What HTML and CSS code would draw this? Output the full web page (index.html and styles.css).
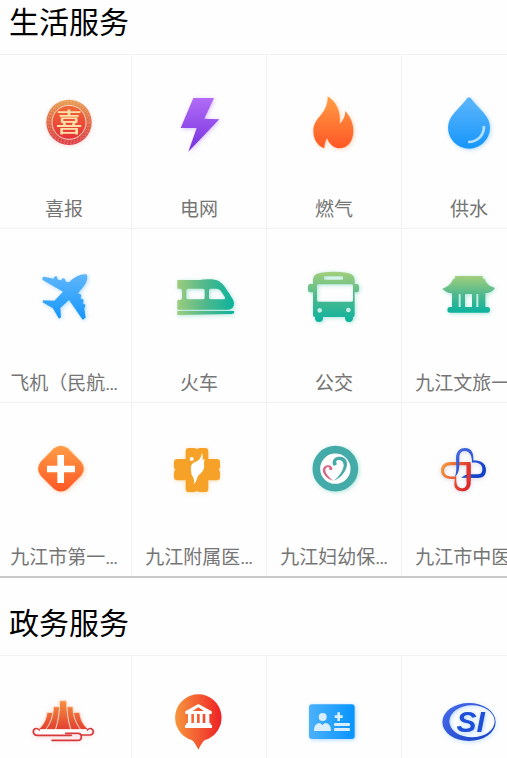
FILE: index.html
```html
<!DOCTYPE html>
<html lang="zh-CN">
<head>
    <meta charset="UTF-8">
    <meta name="viewport" content="width=device-width, initial-scale=1">
    <title>生活服务</title>
    <link rel="stylesheet" href="styles.css">
</head>
<body>
    <main class="page">
        <!-- life services -->
        <section class="service">
            <h2 class="title">生活服务</h2>
            <div class="grid">
                <a class="item" href="#">
                    <svg class="icon glow-red" viewBox="72 249 240 240" aria-hidden="true">
                        <defs>
                            <linearGradient id="coinRim" x1="0" y1="0" x2="0" y2="1"><stop offset="0" stop-color="#e8a055"/><stop offset="0.5" stop-color="#df6644"/><stop offset="1" stop-color="#dc3a4a"/></linearGradient>
                            <linearGradient id="coin" x1="0" y1="0" x2="0" y2="1"><stop offset="0" stop-color="#f26a35"/><stop offset="1" stop-color="#e5303a"/></linearGradient>
                        </defs>
                        <circle cx="207" cy="367" r="68" fill="url(#coinRim)"/>
                        <circle cx="207" cy="367" r="63" fill="none" stroke="#fbd5b0" stroke-opacity="0.35" stroke-width="4" stroke-dasharray="5 5"/>
                        <circle cx="207" cy="367" r="57" fill="none" stroke="#fbd5b0" stroke-opacity="0.3" stroke-width="4" stroke-dasharray="4 6"/>
                        <circle cx="207" cy="367" r="51" fill="url(#coin)" stroke="#fbd9c4" stroke-width="3"/>
                        <text class="coin-text" x="207" y="397" text-anchor="middle">喜</text>
                    </svg>
                    <span class="label">喜报</span>
                </a>
                <a class="item" href="#">
                    <svg class="icon glow-purple" viewBox="477 249 240 240" aria-hidden="true">
                        <defs>
                            <linearGradient id="bolt" x1="0" y1="0" x2="0" y2="1"><stop offset="0" stop-color="#b26cf8"/><stop offset="1" stop-color="#7431dc"/></linearGradient>
                        </defs>
                        <path fill="url(#bolt)" d="M580 294H642L613 356L658 358L565 455L590 384H542Z"/>
                    </svg>
                    <span class="label">电网</span>
                </a>
                <a class="item" href="#">
                    <svg class="icon glow-orange" viewBox="120 249 240 240" aria-hidden="true">
                        <defs>
                            <linearGradient id="orange" x1="0" y1="0" x2="0" y2="1"><stop offset="0" stop-color="#ff9d45"/><stop offset="1" stop-color="#ff5724"/></linearGradient>
                        </defs>
                        <path fill="url(#orange)" d="M221 289C246 305 262 335 257 371C268 362 274 348 274 333C290 352 298 370 298 392C298 425 280 445 255 445C238 444 226 432 219 415C214 424 211 434 211 445C190 437 178 418 178 393C178 350 222 345 221 289Z"/>
                    </svg>
                    <span class="label">燃气</span>
                </a>
                <a class="item" href="#">
                    <svg class="icon glow-blue" viewBox="525 249 240 240" aria-hidden="true">
                        <defs>
                            <linearGradient id="blue" x1="0" y1="0" x2="0" y2="1"><stop offset="0" stop-color="#5fb6fb"/><stop offset="1" stop-color="#1596fb"/></linearGradient>
                        </defs>
                        <path fill="url(#blue)" d="M640 294Q645 290 650 294C662 310 677 325 690 340C702 354 708 368 708 383A63 63 0 0 1 582 383C582 368 588 354 600 340C613 325 628 310 640 294Z"/>
                        <path fill="none" stroke="#b5e0ff" stroke-width="8" d="M642 426C672 426 690 405 690 378"/>
                    </svg>
                    <span class="label">供水</span>
                </a>
                <a class="item" href="#">
                    <svg class="icon glow-blue" viewBox="72 51 240 240" aria-hidden="true">
                        <path fill="url(#blue)" d="M257 103Q262 103 262 110C262 128 250 140 233 161C238 160 244 163 244 169L241 176C246 175 251 178 251 184L248 191C252 190 256 193 256 198L253 206L257 233L248 239L207 180L181 204L183 232L177 236L158 204L127 187L130 181L163 182L189 155L127 119L128 112L133 110L161 116C161 110 166 107 170 109L174 119L184 121C185 114 190 113 194 116L198 125L206 127C225 110 240 102 257 103Z"/>
                    </svg>
                    <span class="label">飞机（民航…</span>
                </a>
                <a class="item" href="#">
                    <svg class="icon glow-green" viewBox="477 51 240 240" aria-hidden="true">
                        <defs>
                            <linearGradient id="train" x1="532" y1="0" x2="702" y2="0" gradientUnits="userSpaceOnUse"><stop offset="0" stop-color="#9dcc7c"/><stop offset="0.5" stop-color="#4fb88c"/><stop offset="1" stop-color="#0cb39e"/></linearGradient>
                        </defs>
                        <path fill="url(#train)" fill-rule="evenodd" d="M532 120H600Q610 117 635 118C660 120 668 131 684 155C696 173 702 182 702 190Q702 207 685 209H532V180H540Q546 180 546 174V152Q546 146 540 146H532ZM564 146Q559 146 559 151V173Q559 178 564 178H609Q614 178 614 173V151Q614 146 609 146ZM632 146Q627 146 627 151V173Q627 178 632 178H670Q678 178 674 170L662 152Q657 146 649 146Z"/>
                        <path fill="url(#train)" d="M532 213H702V220L695 222L532 225Z"/>
                    </svg>
                    <span class="label">火车</span>
                </a>
                <a class="item" href="#">
                    <svg class="icon glow-green" viewBox="120 51 240 240" aria-hidden="true">
                        <defs>
                            <linearGradient id="green" x1="0" y1="0" x2="0" y2="1"><stop offset="0" stop-color="#a3cf7c"/><stop offset="0.5" stop-color="#4fb98d"/><stop offset="1" stop-color="#0bb29f"/></linearGradient>
                        </defs>
                        <path fill="url(#green)" fill-rule="evenodd" d="M177 122C177 106 184 101 200 98Q239 93 278 98C294 101 302 106 302 122V132H308Q315 132 315 139V150Q315 157 308 157H302V225Q302 231 297 231V234Q297 246 285 246Q273 246 273 234V231H207V234Q207 246 195 246Q183 246 183 234V231Q177 231 177 225V157H169Q162 157 162 150V139Q162 132 169 132H177ZM213 109Q210 109 210 112V116Q210 119 213 119H264Q267 119 267 116V112Q267 109 264 109ZM193 133Q189 133 189 137V181Q189 185 193 185H293Q297 185 297 181V137Q297 133 293 133ZM190 211A7 7 0 1 0 204 211A7 7 0 1 0 190 211ZM276 210A7 7 0 1 0 290 210A7 7 0 1 0 276 210Z"/>
                    </svg>
                    <span class="label">公交</span>
                </a>
                <a class="item" href="#">
                    <svg class="icon glow-green" viewBox="525 51 240 240" aria-hidden="true">
                        <path fill="url(#green)" fill-rule="evenodd" d="M603 108H686V115L692 118Q698 137 723 144Q714 158 694 160V201H702Q708 202 708 209Q708 218 700 218H588Q580 218 580 209Q580 202 586 201H594V160Q576 158 565 146Q590 138 597 118L603 115ZM614 162V201H620V162ZM633 162V201H654V162ZM667 162V201H673V162Z"/>
                    </svg>
                    <span class="label">九江文旅一…</span>
                </a>
                <a class="item" href="#">
                    <svg class="icon glow-orange" viewBox="72 63 240 240" aria-hidden="true">
                        <path fill="url(#orange)" d="M162 115Q182 100 203 115L243 155Q260 176 243 197L203 237Q182 252 162 237L122 197Q106 176 122 155Z"/>
                        <path fill="#fff" d="M172 135H192V167H225V187H192V219H172V187H141V167H172Z"/>
                    </svg>
                    <span class="label">九江市第一…</span>
                </a>
                <a class="item" href="#">
                    <svg class="icon glow-amber" viewBox="477 63 240 240" aria-hidden="true">
                        <path fill="#f6a229" d="M567 114H584L591 117L598 114H615Q625 114 625 124V147H650Q660 147 660 157V173L656 179L660 185V201Q660 211 650 211H625V236Q625 246 615 246H598L591 243L584 246H567Q557 246 557 236V211H532Q522 211 522 201V185L526 179L522 173V157Q522 147 532 147H557V124Q557 114 567 114Z"/>
                        <circle cx="575" cy="147" r="6" fill="#fff"/>
                        <path fill="#fff" d="M573 168Q578 157 591 154Q603 147 606 128Q610 140 607 149L614 148Q611 156 612 162Q615 178 603 189Q592 197 591 206Q588 218 581 222Q584 211 580 203Q572 192 573 181Z"/>
                    </svg>
                    <span class="label">九江附属医…</span>
                </a>
                <a class="item" href="#">
                    <svg class="icon glow-green" viewBox="120 63 240 240" aria-hidden="true">
                        <circle cx="244" cy="176" r="57" fill="#fff" stroke="#45aba8" stroke-width="23"/>
                        <path fill="#45aba8" d="M237 165C232 145 249 138 264 141C281 145 283 166 273 183C265 197 253 207 240 212C257 197 267 182 269 168C270 154 260 148 252 150C245 152 246 158 249 162C245 167 239 169 237 165Z"/>
                        <path fill="#d96588" d="M234 180C238 171 229 165 219 166C207 169 203 181 210 192C216 203 227 210 238 212C225 203 214 190 214 180C215 171 223 169 227 174C224 175 224 182 234 180Z"/>
                    </svg>
                    <span class="label">九江妇幼保…</span>
                </a>
                <a class="item" href="#">
                    <svg class="icon glow-grey" viewBox="525 63 240 240" aria-hidden="true">
                        <defs>
                            <linearGradient id="knotRed" x1="562" y1="160" x2="650" y2="200" gradientUnits="userSpaceOnUse"><stop offset="0" stop-color="#f5a23c"/><stop offset="0.6" stop-color="#e8502f"/><stop offset="1" stop-color="#dc2a2c"/></linearGradient>
                            <linearGradient id="knotBlue" x1="605" y1="115" x2="695" y2="200" gradientUnits="userSpaceOnUse"><stop offset="0" stop-color="#4a6be0"/><stop offset="1" stop-color="#0b3cc4"/></linearGradient>
                        </defs>
                        <path fill="url(#knotRed)" d="M650 156V221C649 236 638 244 625 244C609 244 599 234 601 220L602 206C574 210 561 197 561 182C561 164 574 156 590 156ZM638 166H590C575 166 570 175 571 186C573 197 586 202 607 199C606 215 607 234 623 235C634 235 638 229 638 217Z"/>
                        <path fill="url(#knotBlue)" d="M602 201C610 185 606 160 606 143C607 123 619 114 633 114C651 114 660 127 658 151C684 151 696 162 696 181C695 198 686 204 671 204L621 203Q635 192 653 193H669C680 193 685 189 685 177C685 164 674 156 654 158C654 138 648 123 632 123C620 123 616 132 616 144C616 170 617 191 602 201Z"/>
                        <path fill="#df352d" d="M638 163H650V215H638Z"/>
                    </svg>
                    <span class="label">九江市中医…</span>
                </a>
            </div>
        </section>

        <!-- government services -->
        <section class="service">
            <h2 class="title">政务服务</h2>
            <div class="grid">
                <a class="item" href="#">
                    <svg class="icon glow-red" viewBox="72 312 240 240" aria-hidden="true">
                        <defs>
                            <linearGradient id="hill" x1="0" y1="363" x2="0" y2="460" gradientUnits="userSpaceOnUse"><stop offset="0" stop-color="#f78f3f"/><stop offset="1" stop-color="#e0352f"/></linearGradient>
                        </defs>
                        <!-- outer ridges first, the middle one goes on top -->
                        <g fill="url(#hill)" stroke="#fde3d0" stroke-width="3">
                            <path d="M141 397H159L172 450H113C130 436 139 418 141 397Z"/>
                            <path d="M239 397H221L208 450H267C250 436 241 418 239 397Z"/>
                            <path d="M160 380H180L186 450H136C152 430 160 407 160 380Z"/>
                            <path d="M219 380H199L194 450H243C227 430 219 407 219 380Z"/>
                            <path d="M179 362H200C200 392 204 424 213 450H166C175 424 179 394 179 362Z"/>
                        </g>
                        <path fill="#fff" d="M108 448H272V466H108Z"/>
                        <g fill="none" stroke="#d8383a" stroke-width="5" stroke-linecap="round" stroke-linejoin="round">
                            <path d="M118 450C108 441 99 447 100 457Q102 466 112 466H214"/>
                            <path d="M262 450C271 441 280 447 280 456Q279 465 269 465H244"/>
                            <path d="M197 460H234Q244 460 244 470Q244 481 233 481H156"/>
                        </g>
                    </svg>
                </a>
                <a class="item" href="#">
                    <svg class="icon" viewBox="477 312 240 240" aria-hidden="true">
                        <defs>
                            <linearGradient id="pin" x1="0" y1="0" x2="1" y2="0"><stop offset="0" stop-color="#f7963d"/><stop offset="1" stop-color="#ee2127"/></linearGradient>
                        </defs>
                        <path fill="url(#pin)" d="M595 343A70 70 0 0 1 615 480Q608 483 595 509Q582 483 575 480A70 70 0 0 1 595 343Z"/>
                        <path fill="#fff" fill-rule="evenodd" d="M595 372L635 394V402H628V429H632V435H636V444H555V435H559V429H564V402H556V394ZM595 382L578 393H612ZM574 402V429H582V402ZM591 402V429H599V402ZM608 402V429H616V402Z"/>
                    </svg>
                </a>
                <a class="item" href="#">
                    <svg class="icon glow-blue" viewBox="120 312 240 240" aria-hidden="true">
                        <defs>
                            <linearGradient id="card" x1="0" y1="0" x2="1" y2="0"><stop offset="0" stop-color="#4bb1fb"/><stop offset="1" stop-color="#0794fd"/></linearGradient>
                        </defs>
                        <rect x="165" y="373" width="137" height="104" rx="9" fill="url(#card)"/>
                        <g fill="#d9efff">
                            <circle cx="206" cy="411" r="12"/>
                            <path d="M180 453C180 436 187 430 198 429L205 435L213 429C224 430 231 436 231 453Z"/>
                            <path d="M250 397H258V406H266V414H258V423H250V414H242V406H250Z"/>
                            <rect x="240" y="429" width="48" height="9" rx="3"/>
                            <rect x="240" y="444" width="48" height="9" rx="3"/>
                        </g>
                    </svg>
                </a>
                <a class="item" href="#">
                    <svg class="icon glow-blue" viewBox="525 312 240 240" aria-hidden="true">
                        <defs>
                            <linearGradient id="si" x1="0" y1="0" x2="1" y2="1"><stop offset="0" stop-color="#4a6cec"/><stop offset="1" stop-color="#1741c4"/></linearGradient>
                        </defs>
                        <path fill="url(#si)" fill-rule="evenodd" d="M565 426A80 57 0 1 0 725 426A80 57 0 1 0 565 426ZM586 424A68 48 0 1 1 722 424A68 48 0 1 1 586 424Z"/>
                        <text class="si-text" x="650" y="457" text-anchor="middle">SI</text>
                    </svg>
                </a>
            </div>
        </section>
    </main>
</body>
</html>
```
FILE: styles.css
```css
body {
    margin: 0;
    background-color: #fefefe;
    font-family: Roboto, "Noto Sans CJK SC", sans-serif;
}

/* one screen of the scrolling list */
.page {
    height: 100vh;
    overflow: hidden;
}

/* grey bar between the groups */
.service {
    border-bottom: 2px solid #c8c8c8;
}
.service + .service {
    padding-top: 23px;
}

.title {
    margin: 0;
    padding: 0 9px 8px;
    border-bottom: 1px solid #f2f2f2;
    color: #000;
    font-size: 30px;
    font-weight: 400;
    line-height: 46px;
}

/* four fixed cells, the last one runs off the right side */
.grid {
    display: grid;
    grid-template-columns: repeat(4, 135px);
    margin-left: -3px;
}

.item {
    display: flex;
    flex-direction: column;
    align-items: center;
    gap: 33px;
    padding: 28px 0 4px;
    border-right: 1px solid #f2f2f2;
    border-bottom: 1px solid #f2f2f2;
    color: #757575;
    text-decoration: none;
}
.item:nth-last-child(-n+4) {
    border-bottom: none;
}

.icon {
    width: 80px;
    height: 80px;
}

.label {
    font-size: 19px;
    line-height: 28px;
    white-space: nowrap;
}

/* lettering inside the icons */
.coin-text {
    fill: #fde0a8;
    font-family: "Noto Sans CJK SC", sans-serif;
    font-size: 80px;
    font-weight: 500;
}
.si-text {
    fill: #1f4fd8;
    font-family: "Liberation Sans", sans-serif;
    font-size: 90px;
    font-style: italic;
    font-weight: 700;
}

/* soft coloured shadow under each icon */
.glow-red { filter: drop-shadow(0 1px 2px rgba(230, 60, 50, 0.2)); }
.glow-purple { filter: drop-shadow(1px 1px 2px rgba(150, 80, 240, 0.35)); }
.glow-orange { filter: drop-shadow(1px 1px 2px rgba(255, 130, 50, 0.35)); }
.glow-amber { filter: drop-shadow(0 1px 2px rgba(244, 163, 44, 0.3)); }
.glow-blue { filter: drop-shadow(1px 1px 2px rgba(40, 150, 255, 0.35)); }
.glow-green { filter: drop-shadow(1px 1px 2px rgba(20, 180, 150, 0.35)); }
.glow-grey { filter: drop-shadow(0 1px 2px rgba(90, 90, 160, 0.25)); }
```
